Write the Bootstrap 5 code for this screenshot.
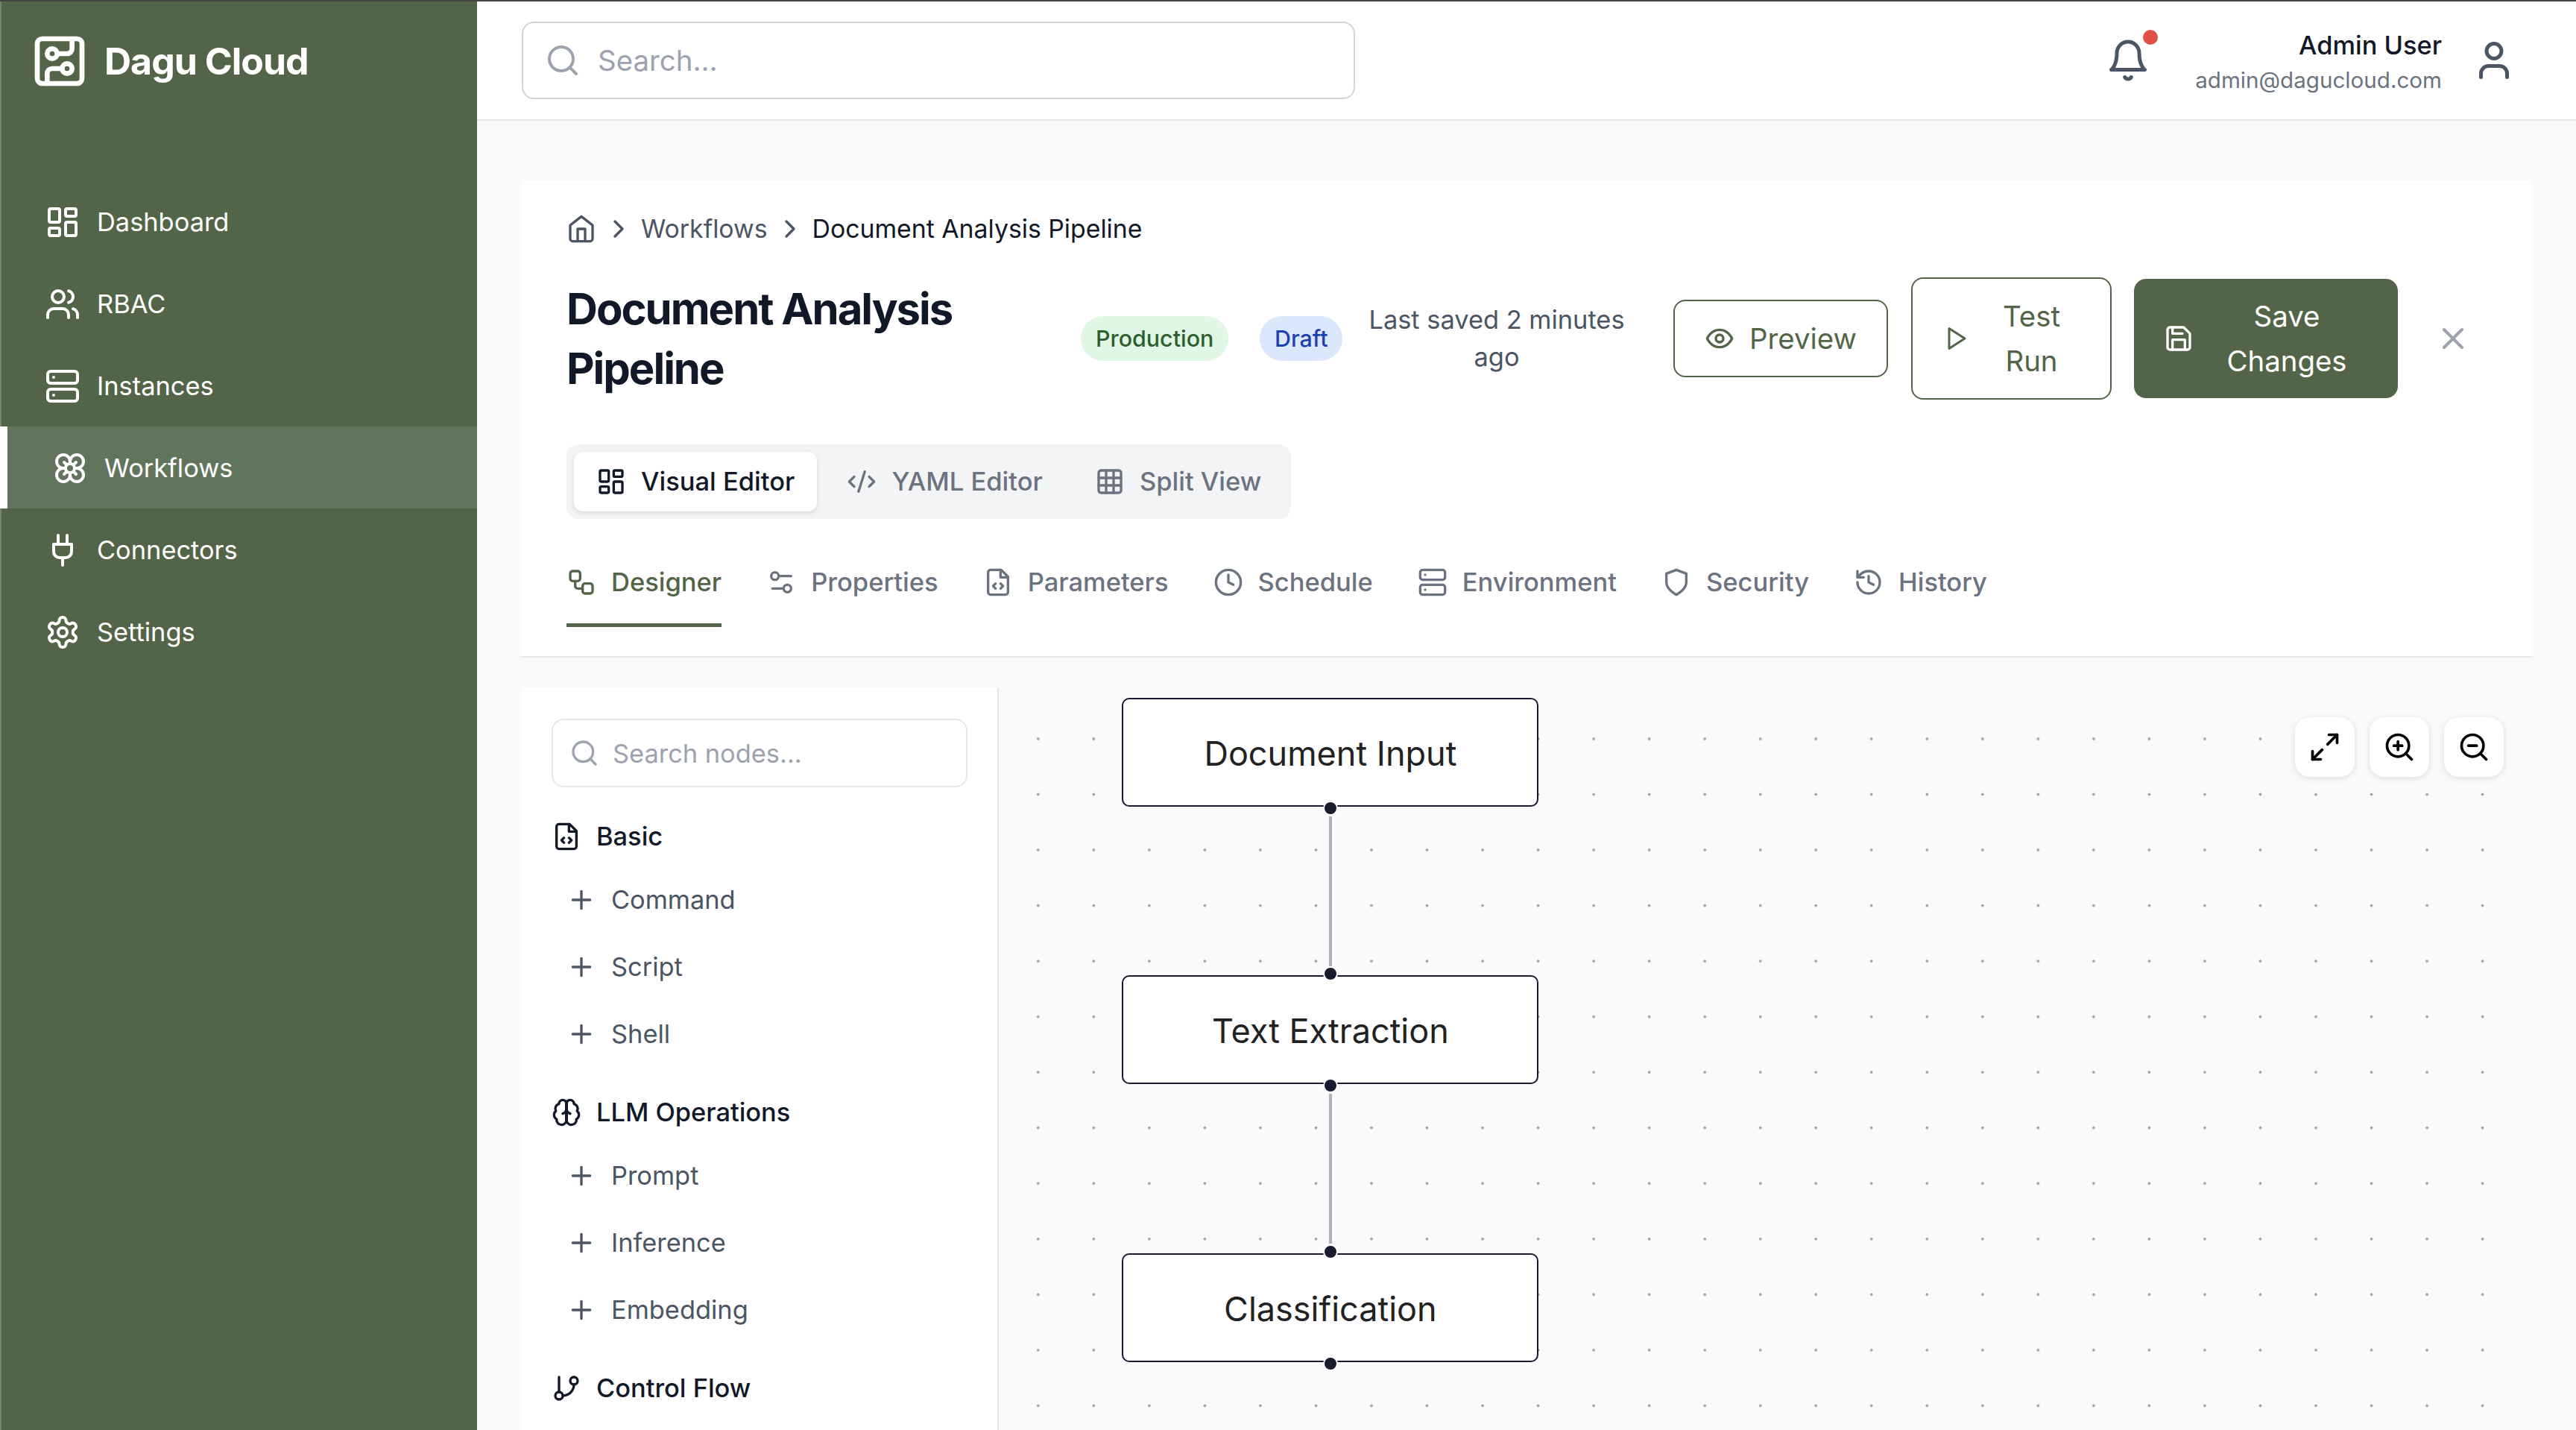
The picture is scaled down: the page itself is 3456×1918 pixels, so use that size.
<!DOCTYPE html>
<html lang="en">
<head>
  <meta charset="UTF-8" />
  <meta name="viewport" content="width=device-width, initial-scale=1.0" />
  <title>Dagu Cloud</title>
  <link href="https://cdn.jsdelivr.net/npm/bootstrap@5.3.0/dist/css/bootstrap.min.css" rel="stylesheet">
  <style>
    html { overflow: hidden; background: #f9fafb; }
    body {
      zoom: 2;
      width: 1728px;
      height: 959px;
      overflow: hidden;
      background: #f9fafb;
      border-top: 1px solid #444;
      font-family: Inter, "Liberation Sans", sans-serif;
      font-size: 17.2px;
      color: #111827;
    }
    svg.ico { fill: none; stroke: currentColor; stroke-width: 2; stroke-linecap: round; stroke-linejoin: round; flex: none; display: block; }

    /* sidebar */
    .side-panel { width: 320px; height: 958px; flex: none; background: #536548; color: #fff; border-left: 1px solid #75846c; }
    .side-brand { height: 120px; padding: 20px 0 0 19px; gap: 10px; font-size: 25px; font-weight: 700; line-height: 40px; letter-spacing: -.5px; }
    .side-link { height: 55px; padding: 1px 0 0 29px; gap: 11px; color: #fff; font-size: 17.2px; }
    .side-link:hover, .side-link:focus { color: #fff; }
    .side-link.on { margin-left: -1px; padding-left: 30px; border-left: 5px solid #fff; background: #61755d; }

    /* top bar */
    .top-bar { height: 80px; padding: 0 30px; background: #fff; border-bottom: 1px solid #e5e7eb; }
    .top-search { width: 559px; height: 52px; }
    .top-search .form-control { height: 52px; padding: 0 16px 0 50px; font-size: 19.2px; border-color: #d1d5db; border-radius: 8px; color: #111827; }
    .form-control::placeholder { color: #9ca3af; }
    .top-search svg { left: 15.5px; top: 14px; color: #9ca3af; }
    .top-user { margin-right: 10px; }
    .bell-box { margin-right: 30px; color: #4b5563; }
    .bell-dot { width: 10px; height: 10px; right: -5px; top: -5.5px; border-radius: 50%; background: #e05048; }
    .who-text { padding-top: 2px; }
    .who-name { font-size: 17.2px; font-weight: 500; line-height: 24px; }
    .who-mail { font-size: 14.8px; line-height: 22px; color: #6b7280; }
    .who-icon { margin-left: 20px; color: #4b5563; }

    /* page head */
    .page-wrap { padding: 40px 30px 0; }
    .head-card { height: 320px; padding: 20px 30px 0; background: #fff; border-bottom: 1px solid #e5e7eb; }
    .crumbs { height: 24px; padding-top: 1px; margin-bottom: 21px; gap: 5px; font-size: 16.9px; color: #4b5563; }
    .crumbs li:last-child { color: #111827; }
    .title-row { height: 82px; margin-bottom: 30px; }
    .page-title { width: 345px; margin: 0; font-size: 29px; font-weight: 700; line-height: 40px; letter-spacing: -1px; color: #111827; }
    .tag { height: 30px; padding: 0 10px; font-size: 15.2px; font-weight: 500; line-height: 30px; border-radius: 15px; }
    .tag-prod { width: 99px; margin-right: 21px; background: #e0f7e6; color: #2d5f2e; }
    .tag-draft { width: 55.5px; margin-right: 17.5px; background: #dbe7fb; color: #1e40af; }
    .saved-note { width: 172px; margin-right: 32.5px; text-align: center; line-height: 25px; color: #4b5563; }
    .act-btn { display: flex; align-items: center; gap: 8px; padding: 10px 20px; font-size: 19.2px; line-height: 30px; border-radius: 8px; border: 1px solid #536548; color: #536548; background: #fff; }
    .act-btn span { flex: 1; text-align: center; }
    .act-btn:hover { color: #536548; background: #fff; border-color: #536548; }
    .btn-prev { width: 144px; margin-right: 15.5px; gap: 10px; }
    .btn-test { width: 134.5px; margin-right: 15px; gap: 9px; }
    .btn-save { width: 177px; height: 80px; padding: 10px 20px; background: #536548; color: #fff; border: 0; }
    .btn-save:hover { background: #536548; color: #fff; }
    .btn-shut { margin-left: 25px; padding: 0; border: 0; background: none; color: #9ca3af; }
    .seg-box { width: 486px; height: 50px; padding: 5px; gap: 5px; background: #f3f4f6; border-radius: 8px; margin-bottom: 15px; flex-wrap: nowrap; }
    .seg-box .nav-link { display: flex; align-items: center; height: 40px; padding: 0 15px; gap: 10px; color: #6b7280; font-size: 17.25px; font-weight: 500; border-radius: 6px; white-space: nowrap; }
    .seg-box .nav-link.active { background: #fff; color: #111827; box-shadow: 0 1px 3px rgba(0,0,0,.12); }
    .tab-row { gap: 30px; }
    .tab-row .nav-link { display: flex; align-items: center; height: 57.5px; padding: 0; gap: 10px; color: #6b7280; font-size: 17.25px; font-weight: 500; border-bottom: 2.5px solid transparent; }
    .tab-row .nav-link.active { color: #536548; border-bottom-color: #536548; }

    /* node list */
    .work-area { margin-top: 20px; height: 498px; }
    .node-panel { width: 320px; flex: none; padding: 21px 19px 0 20px; background: #fff; border-right: 1px solid #e5e7eb; overflow: hidden; }
    .node-search { width: 279px; height: 46px; margin-bottom: 13px; }
    .node-search .form-control { height: 46px; padding: 0 14px 0 40px; font-size: 17.2px; border-color: #e5e7eb; border-radius: 8px; }
    .node-search svg { left: 12px; top: 13px; color: #9ca3af; }
    .group-head { height: 40px; gap: 10px; font-size: 17.2px; font-weight: 500; color: #111827; }
    .group-list { margin-bottom: 10px; }
    .group-list li { display: flex; align-items: center; height: 45px; padding-left: 10px; gap: 10px; color: #4b5563; }

    /* canvas */
    .flow-canvas {
      flex: 1;
      background-color: #f9fafb;
      background-image: radial-gradient(circle, #a3a3a3 .9px, transparent 1.1px);
      background-size: 37.27px 37.27px;
      background-position: 7.77px 15.87px;
    }
    .flow-node { left: 82.7px; width: 279.5px; height: 73px; padding-top: 2px; background: #fff; border: 1.25px solid #1a1a2e; border-radius: 5px; font-size: 22.5px; color: #222; }
    .flow-node.n1 { top: 7px; }
    .flow-node.n2 { top: 193px; }
    .flow-node.n3 { top: 379.5px; }
    .flow-pin { left: 50%; width: 10px; height: 10px; margin-left: -5px; background: #1a1a2e; border: 1px solid #fff; border-radius: 50%; }
    .flow-pin.up { top: -7.25px; }
    .flow-pin.down { bottom: -6.75px; }
    .flow-edge { left: 221.5px; width: 2px; height: 100.5px; background: #b1b1b7; }
    .flow-edge.e1 { top: 86.5px; }
    .flow-edge.e2 { top: 272.5px; }
    .flow-tools { top: 20px; right: 18.5px; gap: 10px; }
    .tool-btn { width: 40px; height: 40px; padding: 0; background: #fff; border: 0; border-radius: 10px; box-shadow: 0 1px 4px rgba(0,0,0,.12); color: #000; }
  </style>
</head>
<body>
  <!-- lucide style icons -->
  <svg width="0" height="0" class="position-absolute">
    <symbol id="i-logo" viewBox="0 0 24 24"><rect x="3" y="3" width="18" height="18" rx="2"/><path d="M11 9h4a2 2 0 0 0 2-2V3"/><circle cx="9" cy="9" r="2"/><path d="M7 21v-4a2 2 0 0 1 2-2h4"/><circle cx="15" cy="15" r="2"/></symbol>
    <symbol id="i-dash" viewBox="0 0 24 24"><rect x="3" y="3" width="7" height="9" rx="1"/><rect x="14" y="3" width="7" height="5" rx="1"/><rect x="14" y="12" width="7" height="9" rx="1"/><rect x="3" y="16" width="7" height="5" rx="1"/></symbol>
    <symbol id="i-users" viewBox="0 0 24 24"><path d="M16 21v-2a4 4 0 0 0-4-4H6a4 4 0 0 0-4 4v2"/><circle cx="9" cy="7" r="4"/><path d="M22 21v-2a4 4 0 0 0-3-3.87"/><path d="M16 3.13a4 4 0 0 1 0 7.75"/></symbol>
    <symbol id="i-server" viewBox="0 0 24 24"><rect x="2" y="2" width="20" height="8" rx="2"/><rect x="2" y="14" width="20" height="8" rx="2"/><path d="M6 6h.01"/><path d="M6 18h.01"/></symbol>
    <symbol id="i-flower" viewBox="0 0 24 24"><path d="M12 7.5a4.5 4.5 0 1 1 4.5 4.5M12 7.5A4.5 4.5 0 1 0 7.5 12M12 7.5V9m-4.5 3a4.5 4.5 0 1 0 4.5 4.5M7.5 12H9m7.5 0a4.5 4.5 0 1 1-4.5 4.5m4.5-4.5H15m-3 4.5V15"/><circle cx="12" cy="12" r="3"/><path d="m8 16 1.5-1.5"/><path d="M14.5 9.5 16 8"/><path d="m8 8 1.5 1.5"/><path d="M14.5 14.5 16 16"/></symbol>
    <symbol id="i-plug" viewBox="0 0 24 24"><path d="M12 22v-5"/><path d="M9 8V2"/><path d="M15 8V2"/><path d="M18 8v5a4 4 0 0 1-4 4h-4a4 4 0 0 1-4-4V8Z"/></symbol>
    <symbol id="i-gear" viewBox="0 0 24 24"><path d="M12.22 2h-.44a2 2 0 0 0-2 2v.18a2 2 0 0 1-1 1.73l-.43.25a2 2 0 0 1-2 0l-.15-.08a2 2 0 0 0-2.73.73l-.22.38a2 2 0 0 0 .73 2.73l.15.1a2 2 0 0 1 1 1.72v.51a2 2 0 0 1-1 1.74l-.15.09a2 2 0 0 0-.73 2.73l.22.38a2 2 0 0 0 2.73.73l.15-.08a2 2 0 0 1 2 0l.43.25a2 2 0 0 1 1 1.73V20a2 2 0 0 0 2 2h.44a2 2 0 0 0 2-2v-.18a2 2 0 0 1 1-1.73l.43-.25a2 2 0 0 1 2 0l.15.08a2 2 0 0 0 2.73-.73l.22-.39a2 2 0 0 0-.73-2.73l-.15-.08a2 2 0 0 1-1-1.74v-.5a2 2 0 0 1 1-1.74l.15-.09a2 2 0 0 0 .73-2.73l-.22-.38a2 2 0 0 0-2.73-.73l-.15.08a2 2 0 0 1-2 0l-.43-.25a2 2 0 0 1-1-1.73V4a2 2 0 0 0-2-2z"/><circle cx="12" cy="12" r="3"/></symbol>
    <symbol id="i-search" viewBox="0 0 24 24"><circle cx="11" cy="11" r="8"/><path d="m21 21-4.3-4.3"/></symbol>
    <symbol id="i-bell" viewBox="0 0 24 24"><path d="M6 8a6 6 0 0 1 12 0c0 7 3 9 3 9H3s3-2 3-9"/><path d="M10.3 21a1.94 1.94 0 0 0 3.4 0"/></symbol>
    <symbol id="i-user" viewBox="0 0 24 24"><path d="M19 21v-2a4 4 0 0 0-4-4H9a4 4 0 0 0-4 4v2"/><circle cx="12" cy="7" r="4"/></symbol>
    <symbol id="i-home" viewBox="0 0 24 24"><path d="m3 9 9-7 9 7v11a2 2 0 0 1-2 2H5a2 2 0 0 1-2-2z"/><path d="M9 22V12h6v10"/></symbol>
    <symbol id="i-chev" viewBox="0 0 24 24"><path d="m9 18 6-6-6-6"/></symbol>
    <symbol id="i-eye" viewBox="0 0 24 24"><path d="M2 12s3-7 10-7 10 7 10 7-3 7-10 7-10-7-10-7Z"/><circle cx="12" cy="12" r="3"/></symbol>
    <symbol id="i-play" viewBox="0 0 24 24"><path d="M6 3l14 9-14 9z"/></symbol>
    <symbol id="i-save" viewBox="0 0 24 24"><path d="M19 21H5a2 2 0 0 1-2-2V5a2 2 0 0 1 2-2h11l5 5v11a2 2 0 0 1-2 2z"/><path d="M17 21v-8H7v8"/><path d="M7 3v5h8"/></symbol>
    <symbol id="i-x" viewBox="0 0 24 24"><path d="M18 6 6 18"/><path d="m6 6 12 12"/></symbol>
    <symbol id="i-code" viewBox="0 0 24 24"><path d="m18 16 4-4-4-4"/><path d="m6 8-4 4 4 4"/><path d="m14.5 4-5 16"/></symbol>
    <symbol id="i-grid" viewBox="0 0 24 24"><rect x="3" y="3" width="18" height="18" rx="2"/><path d="M3 9h18"/><path d="M3 15h18"/><path d="M9 3v18"/><path d="M15 3v18"/></symbol>
    <symbol id="i-flow" viewBox="0 0 24 24"><rect x="3" y="3" width="8" height="8" rx="2"/><path d="M7 11v4a2 2 0 0 0 2 2h4"/><rect x="13" y="13" width="8" height="8" rx="2"/></symbol>
    <symbol id="i-props" viewBox="0 0 24 24"><path d="M20 7h-9"/><path d="M14 17H5"/><circle cx="17" cy="17" r="3"/><circle cx="7" cy="7" r="3"/></symbol>
    <symbol id="i-file" viewBox="0 0 24 24"><path d="M14.5 2H6a2 2 0 0 0-2 2v16a2 2 0 0 0 2 2h12a2 2 0 0 0 2-2V7.5L14.5 2z"/><path d="M14 2v6h6"/><path d="m10 13-2 2 2 2"/><path d="m14 17 2-2-2-2"/></symbol>
    <symbol id="i-clock" viewBox="0 0 24 24"><circle cx="12" cy="12" r="10"/><path d="M12 6v6l4 2"/></symbol>
    <symbol id="i-shield" viewBox="0 0 24 24"><path d="M12 22s8-4 8-10V5l-8-3-8 3v7c0 6 8 10 8 10z"/></symbol>
    <symbol id="i-hist" viewBox="0 0 24 24"><path d="M3 12a9 9 0 1 0 9-9 9.75 9.75 0 0 0-6.74 2.74L3 8"/><path d="M3 3v5h5"/><path d="M12 7v5l4 2"/></symbol>
    <symbol id="i-brain" viewBox="0 0 24 24"><path d="M12 5a3 3 0 1 0-5.997.125 4 4 0 0 0-2.526 5.77 4 4 0 0 0 .556 6.588A4 4 0 1 0 12 18Z"/><path d="M12 5a3 3 0 1 1 5.997.125 4 4 0 0 1 2.526 5.77 4 4 0 0 1-.556 6.588A4 4 0 1 1 12 18Z"/><path d="M15 13a4.5 4.5 0 0 1-3-4 4.5 4.5 0 0 1-3 4"/><path d="M12 5v13"/></symbol>
    <symbol id="i-branch" viewBox="0 0 24 24"><path d="M6 3v12"/><circle cx="18" cy="6" r="3"/><circle cx="6" cy="18" r="3"/><path d="M18 9a9 9 0 0 1-9 9"/></symbol>
    <symbol id="i-plus" viewBox="0 0 24 24"><path d="M5 12h14"/><path d="M12 5v14"/></symbol>
    <symbol id="i-max" viewBox="0 0 24 24"><path d="M15 3h6v6"/><path d="M9 21H3v-6"/><path d="M21 3l-7 7"/><path d="M3 21l7-7"/></symbol>
    <symbol id="i-zin" viewBox="0 0 24 24"><circle cx="11" cy="11" r="8"/><path d="m21 21-4.35-4.35"/><path d="M11 8v6"/><path d="M8 11h6"/></symbol>
    <symbol id="i-zout" viewBox="0 0 24 24"><circle cx="11" cy="11" r="8"/><path d="m21 21-4.35-4.35"/><path d="M8 11h6"/></symbol>
  </svg>

  <div class="d-flex">
    <aside class="side-panel">
      <div class="side-brand d-flex align-items-start">
        <svg class="ico" width="40" height="40"><use href="#i-logo"/></svg>
        <span>Dagu Cloud</span>
      </div>
      <nav class="nav flex-column">
        <a class="nav-link side-link d-flex align-items-center" href="#"><svg class="ico" width="24" height="24"><use href="#i-dash"/></svg>Dashboard</a>
        <a class="nav-link side-link d-flex align-items-center" href="#"><svg class="ico" width="24" height="24"><use href="#i-users"/></svg>RBAC</a>
        <a class="nav-link side-link d-flex align-items-center" href="#"><svg class="ico" width="24" height="24"><use href="#i-server"/></svg>Instances</a>
        <a class="nav-link side-link on d-flex align-items-center" href="#"><svg class="ico" width="24" height="24"><use href="#i-flower"/></svg>Workflows</a>
        <a class="nav-link side-link d-flex align-items-center" href="#"><svg class="ico" width="24" height="24"><use href="#i-plug"/></svg>Connectors</a>
        <a class="nav-link side-link d-flex align-items-center" href="#"><svg class="ico" width="24" height="24"><use href="#i-gear"/></svg>Settings</a>
      </nav>
    </aside>

    <div class="flex-grow-1" style="min-width:0">
      <header class="top-bar d-flex align-items-center justify-content-between">
        <div class="top-search position-relative">
          <svg class="ico position-absolute" width="24" height="24"><use href="#i-search"/></svg>
          <input class="form-control" type="text" placeholder="Search...">
        </div>
        <div class="top-user d-flex align-items-center">
          <div class="bell-box position-relative">
            <svg class="ico" width="30" height="30"><use href="#i-bell"/></svg>
            <span class="bell-dot position-absolute"></span>
          </div>
          <div class="who-text text-end">
            <div class="who-name">Admin User</div>
            <div class="who-mail">admin@dagucloud.com</div>
          </div>
          <svg class="ico who-icon" width="30" height="30"><use href="#i-user"/></svg>
        </div>
      </header>

      <div class="page-wrap">
        <section class="head-card">
          <ol class="crumbs list-unstyled d-flex align-items-center">
            <li><svg class="ico" width="20" height="20"><use href="#i-home"/></svg></li>
            <li><svg class="ico" width="20" height="20"><use href="#i-chev"/></svg></li>
            <li>Workflows</li>
            <li><svg class="ico" width="20" height="20"><use href="#i-chev"/></svg></li>
            <li>Document Analysis Pipeline</li>
          </ol>

          <div class="title-row d-flex align-items-center">
            <h1 class="page-title">Document Analysis Pipeline</h1>
            <span class="tag tag-prod text-center">Production</span>
            <span class="tag tag-draft text-center">Draft</span>
            <div class="saved-note">Last saved 2 minutes ago</div>
            <button class="btn act-btn btn-prev"><svg class="ico" width="20" height="20"><use href="#i-eye"/></svg><span>Preview</span></button>
            <button class="btn act-btn btn-test"><svg class="ico" width="18" height="18"><use href="#i-play"/></svg><span>Test Run</span></button>
            <button class="btn act-btn btn-save"><svg class="ico" width="20" height="20"><use href="#i-save"/></svg><span>Save Changes</span></button>
            <button class="btn-shut" aria-label="Close"><svg class="ico" width="24" height="24"><use href="#i-x"/></svg></button>
          </div>

          <ul class="nav seg-box">
            <li class="nav-item"><a class="nav-link active" href="#"><svg class="ico" width="20" height="20"><use href="#i-dash"/></svg>Visual Editor</a></li>
            <li class="nav-item"><a class="nav-link" href="#"><svg class="ico" width="20" height="20"><use href="#i-code"/></svg>YAML Editor</a></li>
            <li class="nav-item"><a class="nav-link" href="#"><svg class="ico" width="20" height="20"><use href="#i-grid"/></svg>Split View</a></li>
          </ul>

          <ul class="nav tab-row">
            <li class="nav-item"><a class="nav-link active" href="#"><svg class="ico" width="20" height="20"><use href="#i-flow"/></svg>Designer</a></li>
            <li class="nav-item"><a class="nav-link" href="#"><svg class="ico" width="20" height="20"><use href="#i-props"/></svg>Properties</a></li>
            <li class="nav-item"><a class="nav-link" href="#"><svg class="ico" width="20" height="20"><use href="#i-file"/></svg>Parameters</a></li>
            <li class="nav-item"><a class="nav-link" href="#"><svg class="ico" width="20" height="20"><use href="#i-clock"/></svg>Schedule</a></li>
            <li class="nav-item"><a class="nav-link" href="#"><svg class="ico" width="20" height="20"><use href="#i-server"/></svg>Environment</a></li>
            <li class="nav-item"><a class="nav-link" href="#"><svg class="ico" width="20" height="20"><use href="#i-shield"/></svg>Security</a></li>
            <li class="nav-item"><a class="nav-link" href="#"><svg class="ico" width="20" height="20"><use href="#i-hist"/></svg>History</a></li>
          </ul>
        </section>

        <div class="work-area d-flex">
          <div class="node-panel">
            <div class="node-search position-relative">
              <svg class="ico position-absolute" width="20" height="20"><use href="#i-search"/></svg>
              <input class="form-control" type="text" placeholder="Search nodes...">
            </div>

            <div class="group-head d-flex align-items-center"><svg class="ico" width="20" height="20"><use href="#i-file"/></svg>Basic</div>
            <ul class="group-list list-unstyled">
              <li><svg class="ico" width="20" height="20"><use href="#i-plus"/></svg>Command</li>
              <li><svg class="ico" width="20" height="20"><use href="#i-plus"/></svg>Script</li>
              <li><svg class="ico" width="20" height="20"><use href="#i-plus"/></svg>Shell</li>
            </ul>

            <div class="group-head d-flex align-items-center"><svg class="ico" width="20" height="20"><use href="#i-brain"/></svg>LLM Operations</div>
            <ul class="group-list list-unstyled">
              <li><svg class="ico" width="20" height="20"><use href="#i-plus"/></svg>Prompt</li>
              <li><svg class="ico" width="20" height="20"><use href="#i-plus"/></svg>Inference</li>
              <li><svg class="ico" width="20" height="20"><use href="#i-plus"/></svg>Embedding</li>
            </ul>

            <div class="group-head d-flex align-items-center"><svg class="ico" width="20" height="20"><use href="#i-branch"/></svg>Control Flow</div>
          </div>

          <div class="flow-canvas position-relative">
            <div class="flow-edge e1 position-absolute"></div>
            <div class="flow-edge e2 position-absolute"></div>

            <div class="flow-node n1 position-absolute d-flex align-items-center justify-content-center">Document Input
              <span class="flow-pin down position-absolute"></span>
            </div>
            <div class="flow-node n2 position-absolute d-flex align-items-center justify-content-center">Text Extraction
              <span class="flow-pin up position-absolute"></span>
              <span class="flow-pin down position-absolute"></span>
            </div>
            <div class="flow-node n3 position-absolute d-flex align-items-center justify-content-center">Classification
              <span class="flow-pin up position-absolute"></span>
              <span class="flow-pin down position-absolute"></span>
            </div>

            <div class="flow-tools position-absolute d-flex">
              <button class="tool-btn d-flex align-items-center justify-content-center"><svg class="ico" width="22" height="22"><use href="#i-max"/></svg></button>
              <button class="tool-btn d-flex align-items-center justify-content-center"><svg class="ico" width="22" height="22"><use href="#i-zin"/></svg></button>
              <button class="tool-btn d-flex align-items-center justify-content-center"><svg class="ico" width="22" height="22"><use href="#i-zout"/></svg></button>
            </div>
          </div>
        </div>
      </div>
    </div>
  </div>

  <script src="https://cdn.jsdelivr.net/npm/bootstrap@5.3.0/dist/js/bootstrap.bundle.min.js"></script>
</body>
</html>
